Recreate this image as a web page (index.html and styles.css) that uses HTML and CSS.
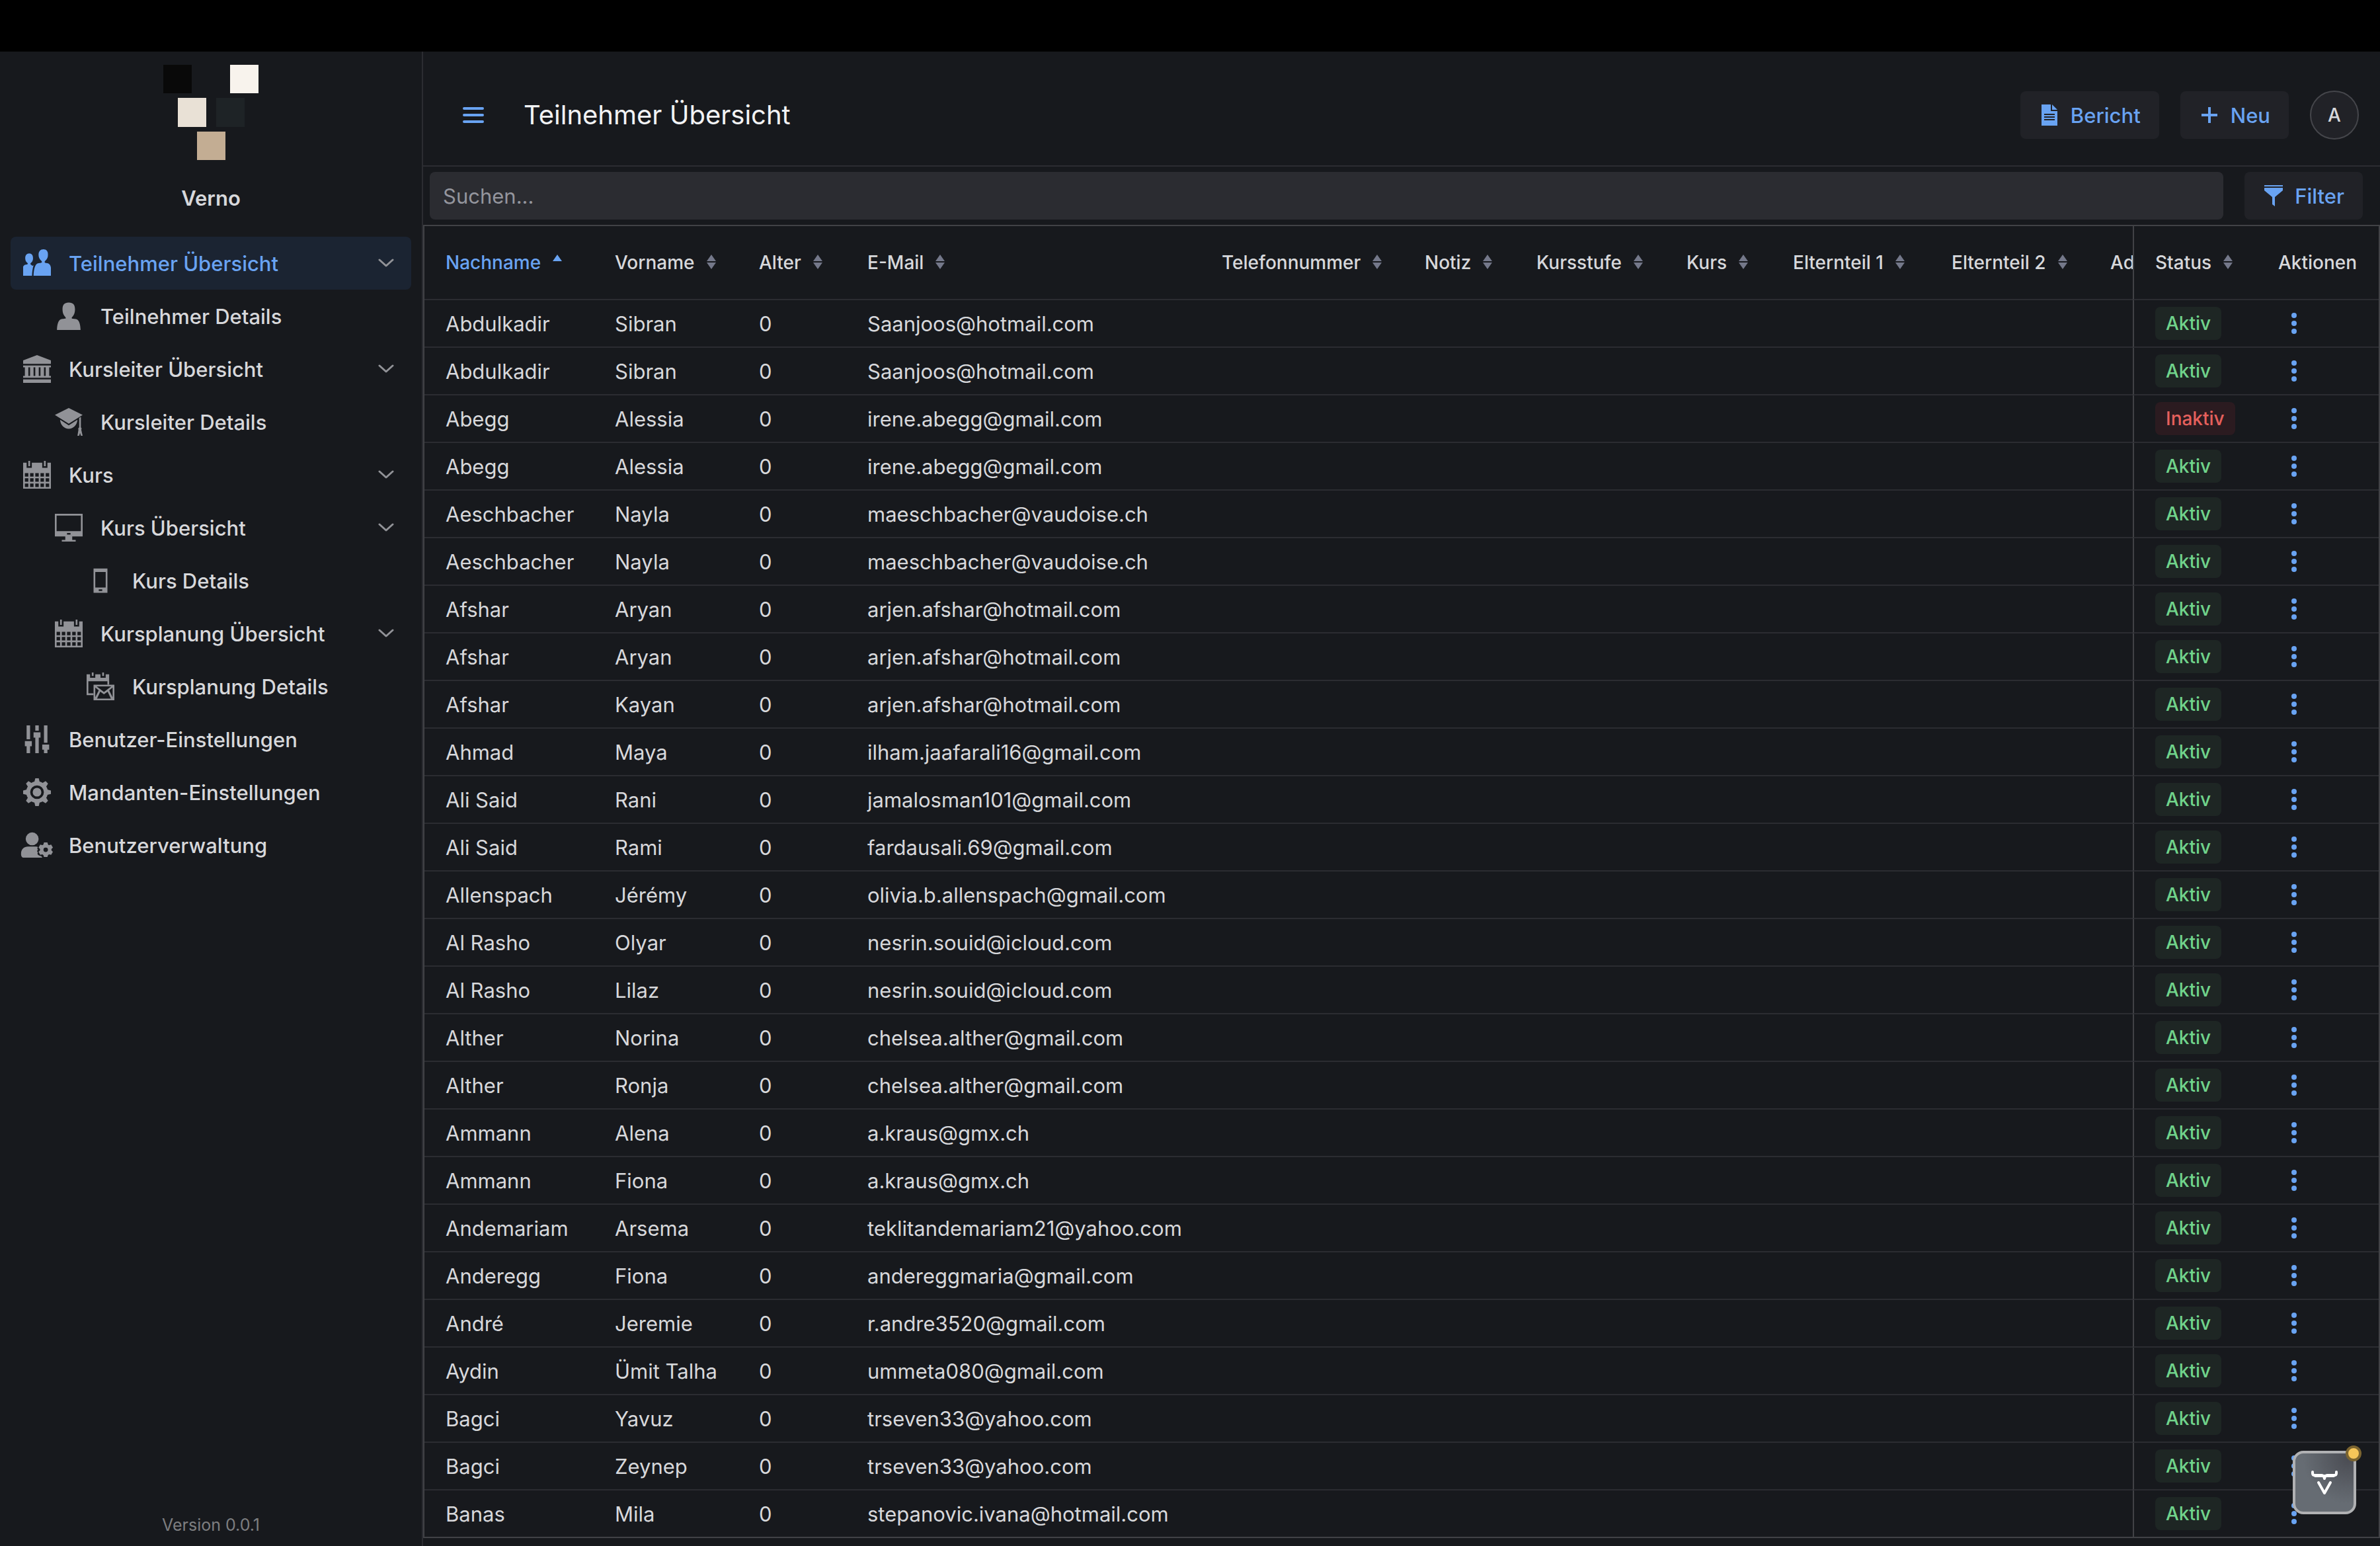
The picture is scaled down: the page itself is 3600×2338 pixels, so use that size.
FILE: index.html
```
<!DOCTYPE html>
<html lang="de">
<head>
    <meta charset="UTF-8">
    <meta name="viewport" content="width=device-width, initial-scale=1.0">
    <title>Teilnehmer Übersicht</title>
    <link rel="stylesheet" href="styles.css">
</head>
<body>
    <!-- Icon sprite -->
    <svg class="sprite" aria-hidden="true">
        <symbol id="users" viewBox="0 0 16 16">
            <path d="M5.3 9.5C4.800 9 4.400 8.900 4.200 8.500c0-.3.1-.5.4-.8.8-.7 1.100-1.500 1.100-2.600C5.700 3.500 5 2.400 3.500 2.400S1.200 3.500 1.200 5.100c0 1.100.4 2 1.100 2.600.3.300.4.500.400.800C1.900 9 .9 8.700.3 9.500L0 10v5.200h5.100C5.200 12.700 5.500 10.800 6 9.200z"/>
            <path d="M14.400 8.100c-.8-.3-1.600-.1-2-.600 0-.5.200-.700.600-1.100.900-.900 1.300-1.900 1.300-3.200C14.400 1.200 13.500 0 11.700 0S8.900 1.200 8.900 3.200c0 1.300.5 2.300 1.300 3.200.4.400.7.600.600 1.100-.6.600-1.500.300-2.600.700C6.700 9 6.100 12 6 15.200h10V10.600c-.2-1.500-.8-2.100-1.600-2.500z"/>
        </symbol>
        <symbol id="user" viewBox="0 0 16 16">
            <path d="M12.500 9.800C11.300 9.400 9.700 9.700 9.700 9.100c0-.4.400-.7.800-1.200.7-.9 1.100-2.200 1.100-3.700C11.600 1.500 10.500.2 8 .2S4.400 1.500 4.400 4.200c0 1.500.4 2.800 1.100 3.700.4.500.8.800.8 1.200 0 .6-1.600.3-2.800.7C2 10.300 1.300 12.800 1.200 16h13.600c-.1-3.200-.8-5.700-2.300-6.200z"/>
        </symbol>
        <symbol id="institution" viewBox="0 0 16 16">
            <path d="M0 14h16v2H0zM8 0L0 3v2h16V3zM0 6v1h1v5H0v1h16v-1h-1V7h1V6zm3 1h1v5H3zm3 1V7h1v5H6zm3 0V7h1v5H9zm3-1h1v5h-1z"/>
        </symbol>
        <symbol id="academy" viewBox="0 0 16 16">
            <path d="M8 0L0 4l8 5 8-5zM3 6.800C3.200 10 5.500 12 8 12s4.800-2 5-5.200L8 10zM14 5.700l1-.6v6c.5.500.5 1 .2 1.400L16 16h-1l-.5-1.600L14 16h-1l.6-3.500c-.3-.4-.2-.9.400-1.400z"/>
        </symbol>
        <symbol id="calendar" viewBox="0 0 16 16">
            <path fill-rule="evenodd" d="M0 1h2v3h3V1h6v3h3V1h2v15H0zM1 7v2h2V7zm3 0v2h2V7zm3 0v2h2V7zm3 0v2h2V7zm3 0v2h2V7zM1 10v2h2v-2zm3 0v2h2v-2zm3 0v2h2v-2zm3 0v2h2v-2zm3 0v2h2v-2zM1 13v2h2v-2zm3 0v2h2v-2zm3 0v2h2v-2zm3 0v2h2v-2zm3 0v2h2v-2zM3 0h1v3H3zM12 0h1v3h-1z"/>
        </symbol>
        <symbol id="desktop" viewBox="0 0 16 16">
            <path fill-rule="evenodd" d="M0 0h16v13h-6v2h2v1H4v-1h2v-2H0zM1 1v9h14V1zM7 11v1h2v-1z"/>
        </symbol>
        <symbol id="mobile" viewBox="0 0 16 16">
            <path fill-rule="evenodd" d="M4 1h8v14H4zM5 3v9h6V3zM7 13v1h2v-1z"/>
        </symbol>
        <symbol id="calendar-envelope" viewBox="0 0 16 16">
            <path d="M3 0h1v2H3zM9 0h1v2H9z"/>
            <path d="M0 1h2v2h3V1h3v2h3V1h2v6h-1V5H1v7h3v1H0z"/>
            <path fill-rule="evenodd" d="M4 7h12v9H4zM5.800 8l4.200 3.200L14.200 8zM5 8.700v5.600l2-4zm10 0l-2 1.600 2 4zM6 15h8l-1.900-4-2.100 1.600L7.900 11z"/>
        </symbol>
        <symbol id="sliders" viewBox="0 0 16 16">
            <path d="M2 0h2v8H2zM1 9h4v3H4v4H2v-4H1zM7 0h2v3H7zM6 4h4v3H9v9H7V7H6zM12 0h2v10h-2zM11 11h4v3h-1v2h-2v-2h-1z"/>
        </symbol>
        <symbol id="cog" viewBox="0 0 16 16">
            <circle cx="8" cy="8" r="2.500"/>
            <circle cx="8" cy="8" r="5.100" fill="none" stroke="currentColor" stroke-width="2.300"/>
            <path id="tooth" d="M7 0h2l.6 2.500H6.400z"/>
            <use href="#tooth" transform="rotate(45 8 8)"/>
            <use href="#tooth" transform="rotate(90 8 8)"/>
            <use href="#tooth" transform="rotate(135 8 8)"/>
            <use href="#tooth" transform="rotate(180 8 8)"/>
            <use href="#tooth" transform="rotate(225 8 8)"/>
            <use href="#tooth" transform="rotate(270 8 8)"/>
            <use href="#tooth" transform="rotate(315 8 8)"/>
        </symbol>
        <symbol id="user-cog" viewBox="0 0 16 16" overflow="visible">
            <circle cx="5.200" cy="4.400" r="3.700"/>
            <path d="M-1.200 13c0-2.600 1.800-4.100 4-4.100h4.700c.4 0 .7.1 1 .2-.5.700-.4 1 .1 1.600-.7.600-.7.900-.1 1.500-.4.800-.3 1.400.7 1.800.6.300 1.200.2 1.600.8l.2.400H.4c-1.100 0-1.600-.8-1.600-2.200z"/>
            <circle cx="13" cy="10.700" r="2.300" fill="none" stroke="currentColor" stroke-width="2"/>
            <path id="small-tooth" d="M12 6.500h2l.5 1.800h-3z"/>
            <use href="#small-tooth" transform="rotate(60 13 10.700)"/>
            <use href="#small-tooth" transform="rotate(120 13 10.700)"/>
            <use href="#small-tooth" transform="rotate(180 13 10.700)"/>
            <use href="#small-tooth" transform="rotate(240 13 10.700)"/>
            <use href="#small-tooth" transform="rotate(300 13 10.700)"/>
        </symbol>
        <symbol id="chevron" viewBox="0 0 24 24">
            <path d="M2 7l10 9 10-9" fill="none" stroke="currentColor" stroke-width="3" stroke-linecap="round" stroke-linejoin="round"/>
        </symbol>
        <symbol id="menu" viewBox="0 0 32 32">
            <rect x="0" y="4" width="32" height="4" rx="2"/>
            <rect x="0" y="14" width="32" height="4" rx="2"/>
            <rect x="0" y="24" width="32" height="4" rx="2"/>
        </symbol>
        <symbol id="file" viewBox="0 0 16 16">
            <path fill-rule="evenodd" d="M2 0h7v5h5v11H2zM4 7v1h8V7zm0 2v1h8V9zm0 2v1h8v-1zM10 0l4 4h-4z"/>
        </symbol>
        <symbol id="plus" viewBox="0 0 16 16">
            <path d="M7 2h2v5h5v2H9v5H7V9H2V7h5z"/>
        </symbol>
        <symbol id="filter" viewBox="0 0 16 16">
            <path d="M1 0h14v1H1zM15 2H1v2l6 5v5.500L9 16V9l6-5z"/>
        </symbol>
        <symbol id="dots" viewBox="0 0 16 16">
            <circle cx="8" cy="2" r="2"/>
            <circle cx="8" cy="8" r="2"/>
            <circle cx="8" cy="14" r="2"/>
        </symbol>
        <symbol id="sort" viewBox="0 0 14 22">
            <path d="M7 0l7 10H0zM0 12h14L7 22z"/>
        </symbol>
        <symbol id="sort-asc" viewBox="0 0 14 22">
            <path d="M7 0l7 10H0z"/>
        </symbol>
    </svg>

    <div class="title-strip"></div>

    <div class="app">
        <aside class="sidebar">
            <svg class="logo" viewBox="0 0 144 144" role="img" aria-label="Verno Logo">
                <rect x="0" y="0" width="43" height="43" fill="#090909"/>
                <rect x="101" y="0" width="43" height="43" fill="#f8f3ed"/>
                <rect x="22" y="50" width="43" height="44" fill="#e9e1d6"/>
                <rect x="80" y="50" width="43" height="44" fill="#1e2326"/>
                <rect x="51" y="101" width="43" height="43" fill="#c3ad93"/>
            </svg>
            <h2 class="brand">Verno</h2>

            <nav class="side-nav">
                <a href="#" class="nav-item active"><svg class="nav-icon"><use href="#users"/></svg><span>Teilnehmer Übersicht</span><svg class="chevron"><use href="#chevron"/></svg></a>
                <a href="#" class="nav-item level-2"><svg class="nav-icon"><use href="#user"/></svg><span>Teilnehmer Details</span></a>
                <a href="#" class="nav-item"><svg class="nav-icon"><use href="#institution"/></svg><span>Kursleiter Übersicht</span><svg class="chevron"><use href="#chevron"/></svg></a>
                <a href="#" class="nav-item level-2"><svg class="nav-icon"><use href="#academy"/></svg><span>Kursleiter Details</span></a>
                <a href="#" class="nav-item"><svg class="nav-icon"><use href="#calendar"/></svg><span>Kurs</span><svg class="chevron"><use href="#chevron"/></svg></a>
                <a href="#" class="nav-item level-2"><svg class="nav-icon"><use href="#desktop"/></svg><span>Kurs Übersicht</span><svg class="chevron"><use href="#chevron"/></svg></a>
                <a href="#" class="nav-item level-3"><svg class="nav-icon"><use href="#mobile"/></svg><span>Kurs Details</span></a>
                <a href="#" class="nav-item level-2"><svg class="nav-icon"><use href="#calendar"/></svg><span>Kursplanung Übersicht</span><svg class="chevron"><use href="#chevron"/></svg></a>
                <a href="#" class="nav-item level-3"><svg class="nav-icon"><use href="#calendar-envelope"/></svg><span>Kursplanung Details</span></a>
                <a href="#" class="nav-item"><svg class="nav-icon"><use href="#sliders"/></svg><span>Benutzer-Einstellungen</span></a>
                <a href="#" class="nav-item"><svg class="nav-icon"><use href="#cog"/></svg><span>Mandanten-Einstellungen</span></a>
                <a href="#" class="nav-item"><svg class="nav-icon"><use href="#user-cog"/></svg><span>Benutzerverwaltung</span></a>
            </nav>

            <div class="version">Version 0.0.1</div>
        </aside>

        <main class="content">
            <header class="page-header">
                <button class="menu-toggle" aria-label="Menü"><svg class="icon"><use href="#menu"/></svg></button>
                <h1>Teilnehmer Übersicht</h1>
                <button class="button"><svg class="icon"><use href="#file"/></svg>Bericht</button>
                <button class="button"><svg class="icon"><use href="#plus"/></svg>Neu</button>
                <button class="avatar">A</button>
            </header>

            <div class="toolbar">
                <input type="text" class="search-input" placeholder="Suchen..." aria-label="Suchen">
                <button class="button"><svg class="icon"><use href="#filter"/></svg>Filter</button>
            </div>

            <table class="grid">
                <colgroup>
                    <col class="col-nachname">
                    <col class="col-vorname">
                    <col class="col-alter">
                    <col class="col-email">
                    <col class="col-telefon">
                    <col class="col-notiz">
                    <col class="col-kursstufe">
                    <col class="col-kurs">
                    <col class="col-eltern">
                    <col class="col-eltern">
                    <col class="col-adresse">
                    <col class="col-status">
                    <col class="col-aktionen">
                </colgroup>
                <thead>
                    <tr>
                        <th class="sorted">Nachname<svg class="sorter"><use href="#sort-asc"/></svg></th>
                        <th>Vorname<svg class="sorter"><use href="#sort"/></svg></th>
                        <th>Alter<svg class="sorter"><use href="#sort"/></svg></th>
                        <th>E-Mail<svg class="sorter"><use href="#sort"/></svg></th>
                        <th>Telefonnummer<svg class="sorter"><use href="#sort"/></svg></th>
                        <th>Notiz<svg class="sorter"><use href="#sort"/></svg></th>
                        <th>Kursstufe<svg class="sorter"><use href="#sort"/></svg></th>
                        <th>Kurs<svg class="sorter"><use href="#sort"/></svg></th>
                        <th>Elternteil 1<svg class="sorter"><use href="#sort"/></svg></th>
                        <th>Elternteil 2<svg class="sorter"><use href="#sort"/></svg></th>
                        <th class="cut">Ad</th>
                        <th class="frozen">Status<svg class="sorter"><use href="#sort"/></svg></th>
                        <th>Aktionen</th>
                    </tr>
                </thead>
                <tbody id="gridBody"></tbody>
            </table>
        </main>
    </div>

    <button class="dev-tools" aria-label="Entwicklerwerkzeuge">
        <svg viewBox="0 0 40 38">
            <path d="M2 3v2q0 3 3 3h11q3 0 4 5 1-5 4-5h11q3 0 3-3V3" stroke-width="4"/>
            <path d="M6 9h28" stroke-width="4"/>
            <path d="M11 19l9 16 9-16" stroke-width="4"/>
        </svg>
        <span class="dev-dot"></span>
    </button>

    <script>
        const rows = [
            ['Abdulkadir', 'Sibran', 'Saanjoos@hotmail.com'],
            ['Abdulkadir', 'Sibran', 'Saanjoos@hotmail.com'],
            ['Abegg', 'Alessia', 'irene.abegg@gmail.com', 'Inaktiv'],
            ['Abegg', 'Alessia', 'irene.abegg@gmail.com'],
            ['Aeschbacher', 'Nayla', 'maeschbacher@vaudoise.ch'],
            ['Aeschbacher', 'Nayla', 'maeschbacher@vaudoise.ch'],
            ['Afshar', 'Aryan', 'arjen.afshar@hotmail.com'],
            ['Afshar', 'Aryan', 'arjen.afshar@hotmail.com'],
            ['Afshar', 'Kayan', 'arjen.afshar@hotmail.com'],
            ['Ahmad', 'Maya', 'ilham.jaafarali16@gmail.com'],
            ['Ali Said', 'Rani', 'jamalosman101@gmail.com'],
            ['Ali Said', 'Rami', 'fardausali.69@gmail.com'],
            ['Allenspach', 'Jérémy', 'olivia.b.allenspach@gmail.com'],
            ['Al Rasho', 'Olyar', 'nesrin.souid@icloud.com'],
            ['Al Rasho', 'Lilaz', 'nesrin.souid@icloud.com'],
            ['Alther', 'Norina', 'chelsea.alther@gmail.com'],
            ['Alther', 'Ronja', 'chelsea.alther@gmail.com'],
            ['Ammann', 'Alena', 'a.kraus@gmx.ch'],
            ['Ammann', 'Fiona', 'a.kraus@gmx.ch'],
            ['Andemariam', 'Arsema', 'teklitandemariam21@yahoo.com'],
            ['Anderegg', 'Fiona', 'andereggmaria@gmail.com'],
            ['André', 'Jeremie', 'r.andre3520@gmail.com'],
            ['Aydin', 'Ümit Talha', 'ummeta080@gmail.com'],
            ['Bagci', 'Yavuz', 'trseven33@yahoo.com'],
            ['Bagci', 'Zeynep', 'trseven33@yahoo.com'],
            ['Banas', 'Mila', 'stepanovic.ivana@hotmail.com']
        ];

        const gridBody = document.getElementById('gridBody');

        rows.forEach(([nachname, vorname, email, status = 'Aktiv']) => {
            const tr = document.createElement('tr');
            tr.innerHTML = `
                <td>${nachname}</td>
                <td>${vorname}</td>
                <td>0</td>
                <td>${email}</td>
                <td></td><td></td><td></td><td></td><td></td><td></td><td></td>
                <td class="frozen"><span class="badge ${status.toLowerCase()}">${status}</span></td>
                <td><button class="row-menu" aria-label="Aktionen"><svg class="icon"><use href="#dots"/></svg></button></td>
            `;
            gridBody.appendChild(tr);
        });
    </script>
</body>
</html>
```
FILE: styles.css
```
* {
    margin: 0;
    padding: 0;
    box-sizing: border-box;
}

body {
    min-height: 100vh;
    display: flex;
    flex-direction: column;
    background-color: #17191d;
    color: #d7d8db;
    font-family: Inter, "Liberation Sans", sans-serif;
    font-size: 31px;
}

button, input {
    font: inherit;
    border: none;
}

button {
    cursor: pointer;
}

svg {
    fill: currentColor;
    flex: none;
}

.sprite {
    display: none;
}

.icon {
    width: 32px;
    height: 32px;
}

.title-strip {
    height: 78px;
    background-color: #000;
}

.app {
    flex: 1;
    display: flex;
}

/* Sidebar */
.sidebar {
    width: 640px;
    flex: none;
    display: flex;
    flex-direction: column;
    border-right: 2px solid #2b2c31;
    padding: 20px 16px 16px;
}

.logo {
    width: 144px;
    height: 144px;
    align-self: center;
}

.brand {
    margin-top: 40px;
    text-align: center;
    font-size: 31px;
    line-height: 36px;
    font-weight: 600;
}

.side-nav {
    margin-top: 40px;
}

.nav-item {
    display: flex;
    align-items: center;
    gap: 27px;
    height: 80px;
    padding: 0 26px 0 19px;
    border-radius: 8px;
    color: #d7d8db;
    font-weight: 500;
    text-decoration: none;
}

.nav-item span {
    flex: 1;
}

.nav-item.level-2 {
    padding-left: 67px;
}

.nav-item.level-3 {
    padding-left: 115px;
}

.nav-item.active {
    background-color: #1b2432;
    color: #69a3f2;
}

.nav-icon {
    width: 42px;
    height: 42px;
    overflow: visible;
    color: #919297;
}

.nav-item.active .nav-icon {
    color: #69a3f2;
}

.chevron {
    width: 24px;
    height: 24px;
    color: #919297;
}

.version {
    margin-top: auto;
    text-align: center;
    font-size: 25px;
    line-height: 32px;
    color: #7d7e80;
}

/* Content */
.content {
    flex: 1;
    min-width: 0;
    padding-bottom: 12px;
}

.page-header {
    display: flex;
    align-items: center;
    gap: 32px;
    padding: 59px 32px 39px 60px;
    border-bottom: 2px solid #2b2c31;
}

.page-header h1 {
    flex: 1;
    margin-left: 28px;
    font-size: 40px;
    line-height: 72px;
    font-weight: 400;
    color: #f2f3f5;
}

.menu-toggle {
    display: flex;
    background: none;
    color: #69a3f2;
}

.button {
    display: flex;
    align-items: center;
    gap: 16px;
    height: 72px;
    padding: 0 28px;
    border-radius: 8px;
    background-color: #212227;
    color: #69a3f2;
    font-weight: 500;
}

.avatar {
    width: 74px;
    height: 74px;
    border: 2px solid #45464b;
    border-radius: 50%;
    background-color: #212227;
    color: #d7d8db;
    font-size: 28px;
    font-weight: 500;
}

.toolbar {
    display: flex;
    gap: 32px;
    padding: 8px 26px 8px 10px;
}

.search-input {
    flex: 1;
    min-width: 0;
    height: 72px;
    padding: 0 20px;
    border-radius: 8px;
    background-color: #2b2c31;
    color: #d7d8db;
}

.search-input::placeholder {
    color: #94959d;
}

/* Grid */
.grid {
    width: 100%;
    table-layout: fixed;
    border-collapse: separate;
    border-spacing: 0;
    border: 2px solid #414246;
}

.col-nachname { width: 256px; }
.col-vorname { width: 218px; }
.col-alter { width: 164px; }
.col-telefon { width: 307px; }
.col-notiz { width: 169px; }
.col-kursstufe { width: 227px; }
.col-kurs { width: 161px; }
.col-eltern { width: 240px; }
.col-adresse { width: 66px; }
.col-status { width: 188px; }
.col-aktionen { width: 184px; }

.grid th,
.grid td {
    padding: 0 0 0 32px;
    text-align: left;
    white-space: nowrap;
    border-bottom: 2px solid #2b2c31;
}

.grid th {
    height: 112px;
    font-size: 28px;
    font-weight: 500;
}

.grid td {
    height: 72px;
}

.grid tbody tr:last-child td {
    height: 70px;
    border-bottom: none;
}

.grid .cut {
    overflow: hidden;
}

.grid .frozen {
    border-left: 2px solid #414246;
}

.grid .sorted {
    color: #69a3f2;
}

.sorter {
    width: 14px;
    height: 22px;
    margin-left: 18px;
    color: #74788a;
}

.sorted .sorter {
    color: #69a3f2;
}

.badge {
    display: inline-block;
    padding: 0 16px;
    border-radius: 8px;
    font-size: 28px;
    line-height: 50px;
    font-weight: 500;
    vertical-align: middle;
}

.badge.aktiv {
    background-color: #1e2624;
    color: #70d38b;
}

.badge.inaktiv {
    background-color: #2b1b20;
    color: #e5605c;
}

.row-menu {
    display: flex;
    padding: 0 8px;
    background: none;
    color: #69a3f2;
}

/* Dev tools button floats above the grid */
.dev-tools {
    position: fixed;
    right: 36px;
    bottom: 48px;
    width: 96px;
    height: 96px;
    display: flex;
    align-items: center;
    justify-content: center;
    border: 4px solid #b0b1b3;
    border-radius: 16px;
    background: radial-gradient(circle at 90% 10%, #4b4d54, #666c73 60%);
}

.dev-tools svg {
    width: 40px;
    height: 38px;
    fill: none;
    stroke: #fff;
    stroke-linecap: round;
    stroke-linejoin: round;
}

.dev-dot {
    position: absolute;
    top: -12px;
    right: -12px;
    width: 24px;
    height: 24px;
    border: 4px solid #7b6430;
    border-radius: 50%;
    background-color: #f6c659;
}
```
